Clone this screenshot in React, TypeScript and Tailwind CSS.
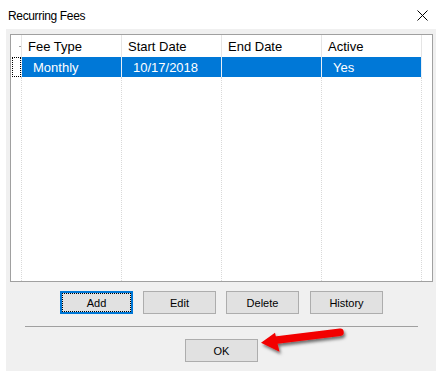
import React from "react";

const cols = ["Fee Type", "Start Date", "End Date", "Active"];
const row = ["Monthly", "10/17/2018", "", "Yes"];

function Btn({ label, focused }: { label: string; focused?: boolean }) {
  if (focused) {
    return (
      <div className="w-[73px] h-[23px] border-2 border-[#0078d7] bg-[#e1e1e1] flex">
        <div className="flex-1 border border-dotted border-black flex items-center justify-center pt-[1px] text-[11px] leading-[13px] text-black">
          {label}
        </div>
      </div>
    );
  }
  return (
    <div className="w-[73px] h-[23px] border border-[#adadad] bg-[#e1e1e1] flex items-center justify-center pt-[1px] text-[11px] leading-[13px] text-black">
      {label}
    </div>
  );
}

export default function App() {
  return (
    <div className="w-[436px] h-[371px] bg-white flex flex-col font-['Liberation_Sans',Arial,sans-serif] text-black relative overflow-hidden">
      {/* Title bar */}
      <div className="h-[29px] flex justify-between shrink-0">
        <div className="pl-[8px] pt-[9px] text-[12px] leading-[14px] tracking-[-0.35px]">Recurring Fees</div>
        <div className="pt-[10px] pr-[8px]">
          <svg width="11" height="11" viewBox="0 0 11 11">
            <path d="M0.5 0.5 L10.5 10.5 M10.5 0.5 L0.5 10.5" stroke="#000" strokeWidth="1" fill="none" />
          </svg>
        </div>
      </div>
      {/* Body */}
      <div className="flex flex-1">
        <div className="w-[6px] bg-white" />
        <div className="flex-1 bg-[#f0f0f0] flex flex-col">
          {/* Grid */}
          <div className="mt-[5px] ml-[4px] w-[423px] h-[248px] border border-[#a0a0a0] bg-white flex flex-col">
            {/* header */}
            <div className="h-[22px] flex shrink-0">
              <div className="w-[11px] border-r border-[#e5e5e5] relative">
                <span className="absolute left-[8px] top-[11px] w-[2px] h-[1px] bg-[#a0a0a0]" />
              </div>
              {cols.map((c) => (
                <div key={c} className="w-[100px] border-r border-[#e5e5e5] flex items-center pl-[6px] pt-[1px] text-[13px]">
                  {c}
                </div>
              ))}
              <div className="flex-1" />
            </div>
            {/* selected row */}
            <div className="h-[20px] flex shrink-0">
              <div className="w-[11px] border-r border-dotted border-[#d9d9d9] flex">
                <div className="ml-[1px] w-[9px] border border-dotted border-black" />
              </div>
              {row.map((c, i) => (
                <div key={i} className="w-[100px] border-r border-[#e8eef6] bg-[#0078d7] flex items-center pl-[11px] pt-[1px] text-[13px] text-white">
                  {c}
                </div>
              ))}
              <div className="flex-1" />
            </div>
            {/* empty area */}
            <div className="flex flex-1">
              <div className="w-[11px] border-r border-dotted border-[#d9d9d9]" />
              {cols.map((c) => (
                <div key={c} className="w-[100px] border-r border-dotted border-[#d9d9d9]" />
              ))}
              <div className="flex-1" />
            </div>
          </div>
          {/* buttons */}
          <div className="mt-[9px] pl-[54px] flex">
            <Btn label="Add" focused />
            <div className="ml-[10px]"><Btn label="Edit" /></div>
            <div className="ml-[10px]"><Btn label="Delete" /></div>
            <div className="ml-[11px]"><Btn label="History" /></div>
          </div>
          {/* separator */}
          <div className="mt-[12px] ml-[19px] w-[393px] h-[1px] bg-[#a0a0a0]" />
          <div className="mt-[12px] pl-[179px] flex">
            <Btn label="OK" />
          </div>
        </div>
      </div>
      {/* red arrow annotation */}
      <svg className="absolute left-[255px] top-[320px]" width="100" height="40" viewBox="0 0 100 40">
        <defs>
          <filter id="sh" x="-20%" y="-60%" width="140%" height="220%">
            <feDropShadow dx="1.5" dy="2.5" stdDeviation="1.5" floodColor="#000" floodOpacity="0.55" />
          </filter>
        </defs>
        <g filter="url(#sh)">
          <line x1="20" y1="20.3" x2="85" y2="12.3" stroke="#f20000" strokeWidth="7.5" strokeLinecap="round" />
          <polygon points="6,22.7 20,12.7 24.5,31.7" fill="#f20000" />
        </g>
      </svg>
    </div>
  );
}
